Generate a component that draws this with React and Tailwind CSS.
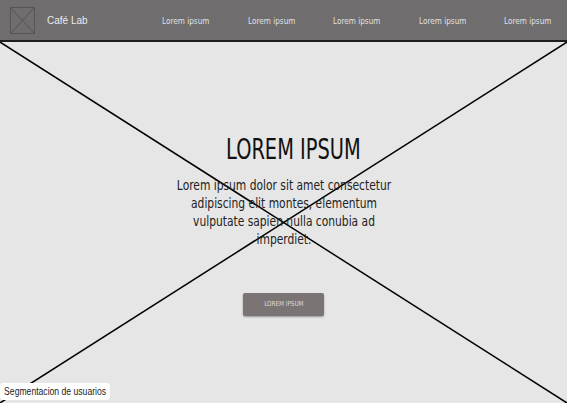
const cond = "font-['DejaVu_Sans_Condensed','DejaVu_Sans',sans-serif]";

export default function App() {
  const nav = ["Lorem ipsum", "Lorem ipsum", "Lorem ipsum", "Lorem ipsum", "Lorem ipsum"];
  return (
    <div className="w-[567px] h-[403px] flex flex-col overflow-hidden bg-[#e6e6e6] relative font-['Liberation_Sans',Arial,sans-serif]">
      <header className="h-[42px] shrink-0 bg-[#6f6d6d] border-b-2 border-[#1e1e1e] flex items-center">
        <div className="ml-[10px] w-[25px] h-[27px] border border-[#555] shrink-0">
          <svg width="23" height="25" viewBox="0 0 23 25" className="block">
            <line x1="0" y1="0" x2="23" y2="25" stroke="#555" strokeWidth="1" />
            <line x1="23" y1="0" x2="0" y2="25" stroke="#555" strokeWidth="1" />
          </svg>
        </div>
        <div className="ml-[12px] w-[96px] shrink-0 text-[10px] text-[#ececec]">Café Lab</div>
        <nav className="flex pt-[3px]">
          {nav.map((n, i) => (
            <span key={i} className={`w-[85.5px] shrink-0 text-center text-[9px] text-[#e2e2e2] scale-x-[0.9] ${cond}`}>{n}</span>
          ))}
        </nav>
      </header>
      <main className="flex-1 relative flex flex-col items-center">
        <svg className="absolute inset-0 w-full h-full" viewBox="0 0 567 361" preserveAspectRatio="none">
          <line x1="0" y1="0" x2="567" y2="361" stroke="#000" strokeWidth="1.5" />
          <line x1="567" y1="0" x2="0" y2="361" stroke="#000" strokeWidth="1.5" />
        </svg>
        <h1 className={`relative mt-[91px] ml-[20px] text-[28px] leading-[34px] text-[#111] scale-x-[0.77] ${cond}`}>LOREM IPSUM</h1>
        <p className={`relative mt-[9px] w-[300px] text-center text-[14px] leading-[18px] text-[#222] scale-x-[0.85] ${cond}`}>
          Lorem ipsum dolor sit amet consectetur<br />
          adipiscing elit montes, elementum<br />
          vulputate sapien nulla conubia ad<br />
          imperdiet.
        </p>
        <button className="relative mt-[45px] w-[81px] h-[23px] rounded-[2px] bg-[#7a7474] shadow-[0_1px_2px_rgba(0,0,0,0.35)] flex items-center justify-center">
          <span className={`text-[7px] text-[#dcdcdc] scale-x-[0.9] ${cond}`}>LOREM IPSUM</span>
        </button>
      </main>
      <div className="absolute left-0 bottom-[3px] origin-left scale-x-[0.82] bg-white rounded-[4px] px-[5px] h-[17px] flex items-center text-[10.5px] text-[#222]">Segmentacion de usuarios</div>
    </div>
  );
}
